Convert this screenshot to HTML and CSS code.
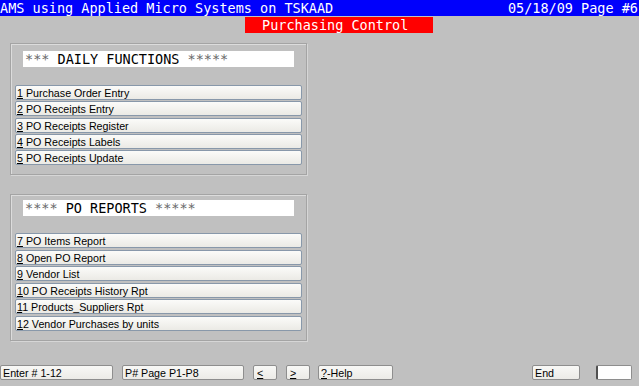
FILE: index.html
```html
<html>
  <head>
    <title>Purchasing Control</title>
    <link rel="stylesheet" href="styles.css">
  </head>
  <body>
    <div class="topbar">
      <span>AMS using Applied Micro Systems on TSKAAD</span>
      <span>05/18/09 Page #6</span>
    </div>
    <div class="titlebar">Purchasing Control</div>

    <div class="group daily">
      <div class="group-title"><span class="stars">***</span> DAILY FUNCTIONS <span class="stars">*****</span></div>
      <div class="menu-list">
        <div class="menu-btn"><u>1</u> Purchase Order Entry</div>
        <div class="menu-btn"><u>2</u> PO Receipts Entry</div>
        <div class="menu-btn"><u>3</u> PO Receipts Register</div>
        <div class="menu-btn"><u>4</u> PO Receipts Labels</div>
        <div class="menu-btn"><u>5</u> PO Receipts Update</div>
      </div>
    </div>

    <div class="group reports">
      <div class="group-title"><span class="stars">****</span> PO REPORTS <span class="stars">*****</span></div>
      <div class="menu-list">
        <div class="menu-btn"><u>7</u> PO Items Report</div>
        <div class="menu-btn"><u>8</u> Open PO Report</div>
        <div class="menu-btn"><u>9</u> Vendor List</div>
        <div class="menu-btn"><u>1</u>0 PO Receipts History Rpt</div>
        <div class="menu-btn"><u>1</u>1 Products_Suppliers Rpt</div>
        <div class="menu-btn"><u>1</u>2 Vendor Purchases by units</div>
      </div>
    </div>

    <div class="footer">
      <div class="field enter">Enter # 1-12</div>
      <div class="field page">P# Page P1-P8</div>
      <div class="field arrow"><u>&lt;</u></div>
      <div class="field arrow"><u>&gt;</u></div>
      <div class="field help"><u>?</u>-Help</div>
      <div class="field end">End</div>
      <div class="field input"></div>
    </div>
  </body>
</html>
```

FILE: styles.css
```css
body {
  margin: 0;
  width: 639px;
  height: 386px;
  overflow: hidden;
  background-color: #c0c0c0;
  font-family: "Liberation Sans", Arial, sans-serif;
  color: #000;
}

/* ----------------------------------- Header bars */
.topbar {
  display: flex;
  justify-content: space-between;
  height: 16px;
  line-height: 16px;
  padding: 0 1px 0 0;
  background-color: #0000fc;
  color: #fff;
  font-family: "DejaVu Sans Mono", monospace;
  font-size: 13.5px;
  white-space: pre;
}

.titlebar {
  margin: 1px 0 0 245px;
  width: 188px;
  height: 16px;
  line-height: 16px;
  padding-left: 17px;
  box-sizing: border-box;
  background-color: #ff0000;
  color: #fff;
  font-family: "DejaVu Sans Mono", monospace;
  font-size: 13.5px;
  white-space: pre;
}

/* ----------------------------------- Menu groups */
.group {
  margin-left: 10px;
  width: 297px;
  box-sizing: border-box;
  border: 1px solid #a4a4a4;
  box-shadow: inset 1px 1px 0 #dcdcdc, 1px 1px 0 #d6d6d6;
  padding: 7px 4px 9px 4px;
}

.daily {
  margin-top: 10px;
}

.reports {
  margin-top: 19px;
  padding-top: 5px;
}

.group-title {
  margin: 0 8px 18px 8px;
  height: 16px;
  line-height: 16px;
  padding-left: 2px;
  background-color: #fff;
  font-family: "DejaVu Sans Mono", monospace;
  font-size: 13.5px;
  white-space: pre;
}

.group-title .stars {
  color: #6a6a6a;
}

.reports .group-title {
  margin-bottom: 17px;
}

.menu-list {
  display: flex;
  flex-direction: column;
  gap: 1.3px;
}

.reports .menu-list {
  gap: 1.5px;
}

.menu-btn {
  height: 15px;
  line-height: 14px;
  box-sizing: border-box;
  padding-left: 1px;
  border: 1px solid #8898aa;
  border-radius: 2px;
  background: linear-gradient(#fbfbf9, #ebeae5);
  font-size: 10.7px;
  white-space: pre;
}

/* ----------------------------------- Footer */
.footer {
  display: flex;
  margin-top: 24px;
  gap: 9px;
}

.field {
  height: 15px;
  line-height: 14px;
  box-sizing: border-box;
  padding-left: 2px;
  border: 1px solid #8e8e8e;
  border-radius: 2px;
  background: linear-gradient(#f8f8f6, #ecebe7);
  font-size: 10.7px;
  white-space: pre;
}

.enter {
  width: 113px;
}

.page {
  width: 122px;
}

.arrow {
  width: 24px;
  padding-left: 3px;
}

.help {
  width: 75px;
  margin-left: -1px;
}

.end {
  width: 48px;
  margin-left: auto;
}

.input {
  width: 36px;
  margin: 0 7px 0 7px;
  border-left: 2px solid #505050;
  background: #fff;
}
```
